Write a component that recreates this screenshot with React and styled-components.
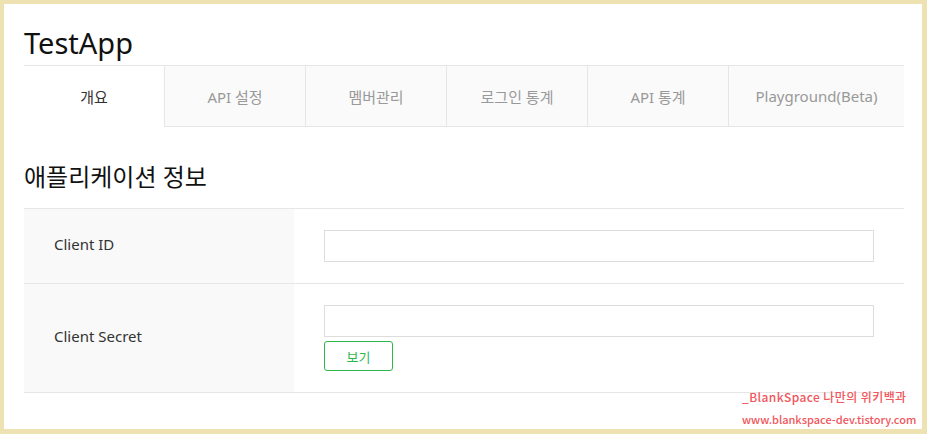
import React from "react";
import styled, { createGlobalStyle } from "styled-components";

const GlobalStyle = createGlobalStyle`
  html, body {
    margin: 0;
    padding: 0;
    background: #ffffff;
  }
  * {
    box-sizing: border-box;
  }
`;

const tabs = ["개요", "API 설정", "멤버관리", "로그인 통계", "API 통계", "Playground(Beta)"];

export const Frame = styled.div`
  width: 927px;
  height: 434px;
  border-style: solid;
  border-color: #efe2b2;
  border-width: 4px 5px 5px 4px;
  background: #ffffff;
  padding: 0 18px 0 20px;
  position: relative;
  font-family: "Noto Sans", "Noto Sans CJK KR", sans-serif;
  color: #222222;
`;

export const AppTitle = styled.h1`
  margin: 0;
  padding-top: 21px;
  height: 61px;
  font-weight: 400;
  font-size: 29px;
  line-height: 36px;
  color: #111111;
`;

export const TabBar = styled.div`
  display: flex;
  border-top: 1px solid #e6e6e6;
  height: 62px;
`;

export const Tab = styled.div`
  flex: ${(p) => (p.last ? "1" : p.first ? "0 0 140px" : "0 0 141px")};
  display: flex;
  align-items: center;
  justify-content: center;
  font-size: 15px;
  color: ${(p) => (p.active ? "#333333" : "#999999")};
  background: ${(p) => (p.active ? "#ffffff" : "#fafafa")};
  border-bottom: 1px solid ${(p) => (p.active ? "transparent" : "#e6e6e6")};
  border-left: ${(p) => (p.active || p.first ? "none" : "1px solid #e6e6e6")};
`;

export const SectionTitle = styled.h2`
  margin: 0;
  padding-top: 33px;
  height: 81px;
  font-weight: 400;
  font-size: 24px;
  line-height: 34px;
  color: #111111;
`;

export const InfoTable = styled.div`
  border-top: 1px solid #e6e6e6;
`;

export const InfoRow = styled.div`
  display: grid;
  grid-template-columns: 270px 1fr;
  border-bottom: 1px solid #e6e6e6;
  min-height: ${(p) => p.height}px;
`;

export const LabelCell = styled.div`
  background: #f9f9f9;
  display: flex;
  align-items: center;
  padding: 0 0 4px 30px;
  font-size: 15px;
  color: #333333;
`;

export const ValueCell = styled.div`
  padding: ${(p) => p.pad} 30px 0 30px;
  display: flex;
  flex-direction: column;
  align-items: flex-start;
  gap: 4px;
`;

export const TextInput = styled.input`
  width: 550px;
  height: 32px;
  border: 1px solid #dddddd;
  outline: none;
  background: #ffffff;
`;

export const GreenButton = styled.button`
  width: 69px;
  height: 30px;
  border: 1px solid #2db84a;
  border-radius: 3px;
  background: #ffffff;
  color: #2db84a;
  font-family: "Noto Sans", "Noto Sans CJK KR", sans-serif;
  font-size: 13px;
  padding: 0;
`;

export const Watermark = styled.div`
  position: absolute;
  left: 738px;
  top: 382px;
  color: #f0565c;
  font-family: "Noto Sans CJK KR", sans-serif;
  font-size: 11px;
  line-height: 22px;
  font-weight: 500;
  white-space: nowrap;
`;

export const WatermarkTitle = styled.div`
  font-size: 12px;
  letter-spacing: 0.4px;
`;

const App = () => {
  return (
    <>
      <GlobalStyle />
      <Frame>
        <AppTitle>TestApp</AppTitle>
        <TabBar>
          {tabs.map((t, i) => (
            <Tab
              key={t}
              active={i === 0}
              first={i === 0}
              last={i === tabs.length - 1}
            >
              {t}
            </Tab>
          ))}
        </TabBar>
        <SectionTitle>애플리케이션 정보</SectionTitle>
        <InfoTable>
          <InfoRow height={75}>
            <LabelCell>Client ID</LabelCell>
            <ValueCell pad="21px">
              <TextInput type="text" />
            </ValueCell>
          </InfoRow>
          <InfoRow height={109}>
            <LabelCell>Client Secret</LabelCell>
            <ValueCell pad="21px">
              <TextInput type="text" />
              <GreenButton>보기</GreenButton>
            </ValueCell>
          </InfoRow>
        </InfoTable>
        <Watermark>
          <WatermarkTitle>_BlankSpace 나만의 위키백과</WatermarkTitle>
          <div>www.blankspace-dev.tistory.com</div>
        </Watermark>
      </Frame>
    </>
  );
};

export default App;
